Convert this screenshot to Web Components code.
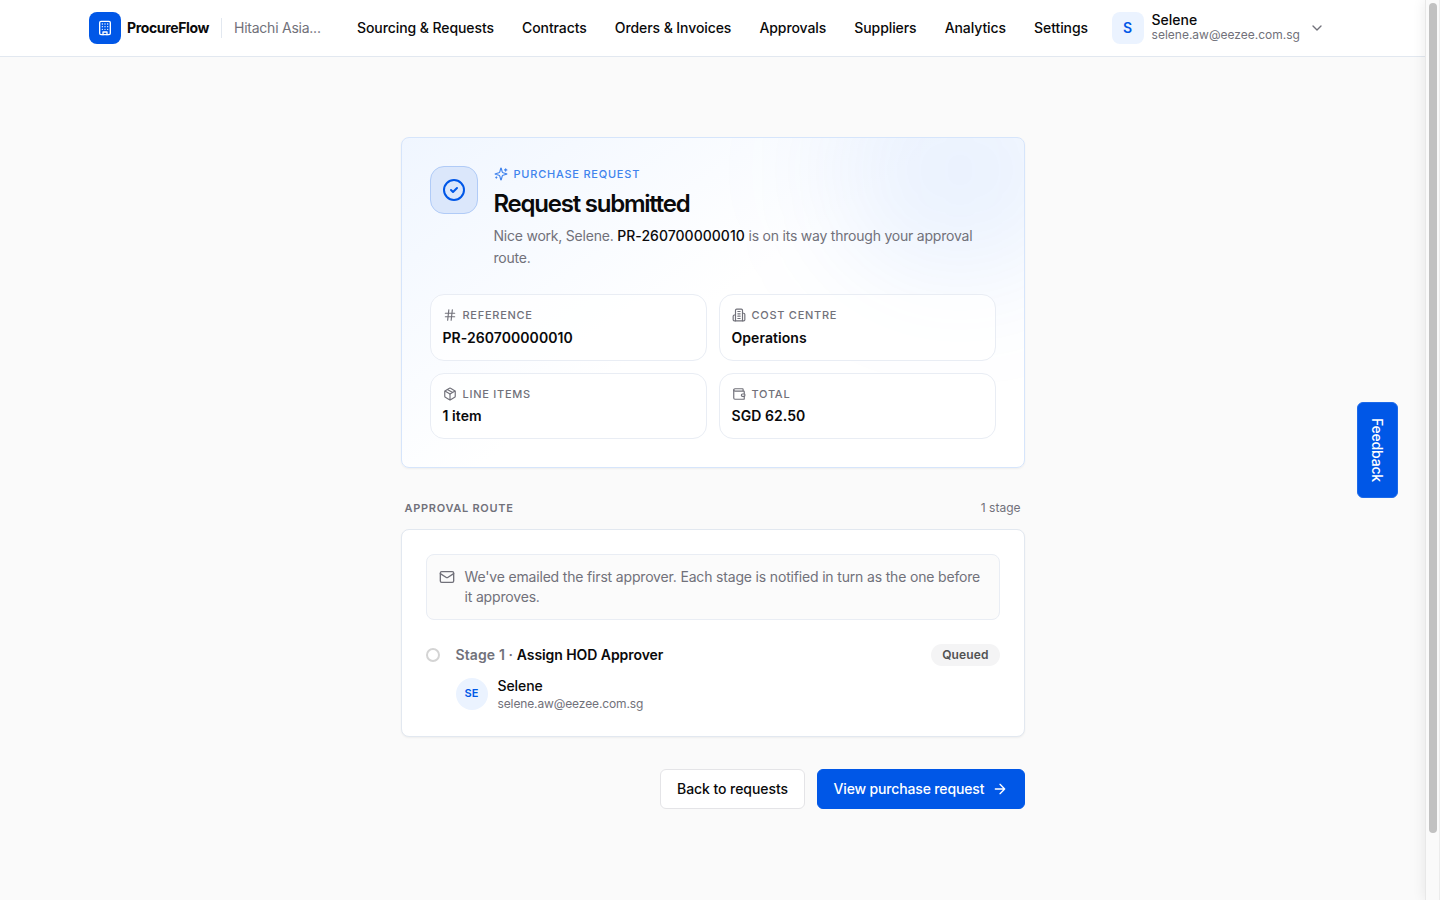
<!DOCTYPE html>
<html lang="en">
<head>
<meta charset="utf-8">
<title>ProcureFlow</title>
<style>
html,body{margin:0;height:100%;overflow:hidden}
body{font-family:Inter,"Liberation Sans",sans-serif;font-size:14px;line-height:20px;color:#0a0a0b;background:#fafafa;--blue:#0057e7;--muted:#71717a;--line:#e2e8f0}
</style>
</head>
<body>
<pf-app></pf-app>
<script>
const ICONS={
building:'<rect width="16" height="20" x="4" y="2" rx="2"/><path d="M9 22v-4h6v4M8 6h.01M16 6h.01M12 6h.01M12 10h.01M12 14h.01M16 10h.01M16 14h.01M8 10h.01M8 14h.01"/>',
building2:'<path d="M6 22V4a2 2 0 0 1 2-2h8a2 2 0 0 1 2 2v18Z"/><path d="M6 12H4a2 2 0 0 0-2 2v6a2 2 0 0 0 2 2h2M18 9h2a2 2 0 0 1 2 2v9a2 2 0 0 1-2 2h-2M10 6h4M10 10h4M10 14h4M10 18h4"/>',
chevron:'<path d="m6 9 6 6 6-6"/>',
check:'<circle cx="12" cy="12" r="10"/><path d="m9 12 2 2 4-4"/>',
sparkles:'<path d="M9.937 15.5A2 2 0 0 0 8.5 14.063l-6.135-1.582a.5.5 0 0 1 0-.962L8.5 9.936A2 2 0 0 0 9.937 8.5l1.582-6.135a.5.5 0 0 1 .963 0L14.063 8.5A2 2 0 0 0 15.5 9.937l6.135 1.581a.5.5 0 0 1 0 .964L15.5 14.063a2 2 0 0 0-1.437 1.437l-1.582 6.135a.5.5 0 0 1-.963 0z"/><path d="M20 3v4M22 5h-4M4 17v2M5 18H3"/>',
hash:'<path d="M4 9h16M4 15h16M10 3 8 21M16 3l-2 18"/>',
box:'<path d="M11 21.73a2 2 0 0 0 2 0l7-4A2 2 0 0 0 21 16V8a2 2 0 0 0-1-1.73l-7-4a2 2 0 0 0-2 0l-7 4A2 2 0 0 0 3 8v8a2 2 0 0 0 1 1.73zM12 22V12"/><path d="m3.3 7 8.7 5 8.7-5M7.5 4.27l9 5.15"/>',
wallet:'<path d="M19 7V4a1 1 0 0 0-1-1H5a2 2 0 0 0 0 4h15a1 1 0 0 1 1 1v4h-3a2 2 0 0 0 0 4h3a1 1 0 0 0 1-1v-2a1 1 0 0 0-1-1"/><path d="M3 5v14a2 2 0 0 0 2 2h15a1 1 0 0 0 1-1v-4"/>',
mail:'<rect width="20" height="16" x="2" y="4" rx="2"/><path d="m22 7-8.97 5.7a1.94 1.94 0 0 1-2.06 0L2 7"/>',
arrow:'<path d="M5 12h14M12 5l7 7-7 7"/>'
};
function define(name,css,html){
  customElements.define(name,class extends HTMLElement{
    constructor(){
      super();
      const t=document.createElement('template');
      const markup=typeof html==='function'?html(this):html;
      t.innerHTML=`<style>*{box-sizing:border-box}${css}</style>${markup}`;
      this.attachShadow({mode:'open'}).append(t.content.cloneNode(true));
    }
  });
}
customElements.define('pf-icon',class extends HTMLElement{
  connectedCallback(){
    if(this.shadowRoot)return;
    const s=this.getAttribute('size')||16,w=this.getAttribute('stroke')||2;
    this.attachShadow({mode:'open'}).innerHTML=`<style>:host{display:block;flex:none;width:${s}px;height:${s}px}svg{display:block}</style><svg width="${s}" height="${s}" viewBox="0 0 24 24" fill="none" stroke="currentColor" stroke-width="${w}" stroke-linecap="round" stroke-linejoin="round">${ICONS[this.getAttribute('name')]}</svg>`;
  }
});
define('pf-brand',`:host{display:flex;align-items:center;width:236px;flex:none}
.logo{width:32px;height:32px;border-radius:8px;background:var(--blue);color:#fff;display:grid;place-items:center}
b{font-weight:700;letter-spacing:-.35px;margin-left:6px;width:94px}
.org{border-left:1px solid var(--line);height:20px;padding-left:12px;color:var(--muted);white-space:nowrap;letter-spacing:-.24px}`,
`<div class="logo"><pf-icon name="building"></pf-icon></div><b>ProcureFlow</b><div class="org">Hitachi Asia...</div>`);
define('pf-nav',`:host{display:flex;gap:28.1px;margin-left:32px;font-weight:500;white-space:nowrap;letter-spacing:-.085px}`,`<slot></slot>`);
define('pf-user',`:host{display:flex;align-items:center;margin-left:23.6px}
.av{width:32px;height:32px;border-radius:8px;background:#ebf3ff;color:#0057e7;font-weight:600;display:grid;place-items:center;margin-right:8px}
.n{font-weight:500;line-height:14px}.e{font-size:12px;line-height:15px;color:var(--muted);width:149px;margin-bottom:1px}
pf-icon{margin-left:8px;color:var(--muted)}`,
`<div class="av">S</div><div><div class="n">Selene</div><div class="e">selene.aw@eezee.com.sg</div></div><pf-icon name="chevron"></pf-icon>`);
define('pf-header',`:host{display:flex;align-items:center;height:57px;background:#fff;border-bottom:1px solid var(--line);padding-left:89px;box-sizing:border-box}`,
`<pf-brand></pf-brand><pf-nav><span>Sourcing &amp; Requests</span><span>Contracts</span><span>Orders &amp; Invoices</span><span>Approvals</span><span>Suppliers</span><span>Analytics</span><span>Settings</span></pf-nav><pf-user></pf-user>`);
define('pf-stat',`:host{display:block;border:1px solid #e9edf4;border-radius:14px;padding:12px;background:rgba(255,255,255,.7)}
.l{display:flex;gap:6px;align-items:center;font-size:11px;line-height:16.5px;font-weight:500;letter-spacing:.73px;color:var(--muted);text-transform:uppercase}
.v{margin-top:4px;font-weight:600;letter-spacing:.06px}`,
el=>`<div class="l"><pf-icon size="14" name="${el.getAttribute('icon')}"></pf-icon>${el.getAttribute('label')}</div><div class="v"><slot></slot></div>`);
define('pf-summary',`:host{display:block;box-sizing:border-box;position:relative;overflow:hidden;border:1px solid #d6e5fb;border-radius:8px;padding:28px;background:linear-gradient(145deg,#f0f6ff 0%,#fff 50%);box-shadow:0 1px 2px rgba(0,0,0,.05)}
.glow{position:absolute;right:-64px;top:-80px;width:256px;height:224px;border-radius:50%;background:rgba(0,97,240,.085);filter:blur(60px)}
.top{display:flex;gap:16px;position:relative}
.ic{width:48px;height:48px;flex:none;border-radius:14px;border:1px solid #b0cbf7;background:#dbe7fb;color:var(--blue);display:grid;place-items:center}
.eb{display:flex;gap:6px;align-items:center;font-size:11px;line-height:16.5px;font-weight:500;letter-spacing:.77px;color:#4083ed}
h1{margin:5px 0 0;font-size:24px;line-height:32px;font-weight:600;letter-spacing:-1.23px}
p{margin:5px 0 0;line-height:22.75px;color:var(--muted);letter-spacing:-.22px;white-space:nowrap}p b{font-weight:500;color:#0a0a0b;letter-spacing:.03px}
.grid{display:grid;grid-template-columns:1fr 1fr;gap:12px;margin-top:24px;position:relative}`,
`<div class="glow"></div><div class="top"><div class="ic"><pf-icon name="check" size="24"></pf-icon></div><div><div class="eb"><pf-icon name="sparkles" size="14"></pf-icon>PURCHASE REQUEST</div><h1>Request submitted</h1><p>Nice work, Selene. <b>PR-260700000010</b> is on its way through your approval<br>route.</p></div></div>
<div class="grid"><pf-stat icon="hash" label="Reference">PR-260700000010</pf-stat><pf-stat icon="building2" label="Cost centre">Operations</pf-stat><pf-stat icon="box" label="Line items">1 item</pf-stat><pf-stat icon="wallet" label="Total">SGD 62.50</pf-stat></div>`);
define('pf-stage',`:host{display:flex;gap:16px;margin-top:24px}
.dot{width:14px;height:14px;border:2px solid #d4d4d4;border-radius:50%;margin-top:4px;flex:none}
.m{flex:1}.h{display:flex;justify-content:space-between;align-items:center;height:22px;font-weight:600;color:var(--muted);letter-spacing:.11px}
.h b{font-weight:600;color:#0a0a0b;letter-spacing:-.07px}.pill{font-size:12px;line-height:22px;font-weight:600;color:#525252;background:#f4f4f5;border-radius:11px;padding:0 11px;letter-spacing:.1px}
.p{display:flex;align-items:center;gap:10px;margin-top:10px}
.av{width:32px;height:32px;border-radius:50%;background:#ebf3ff;color:var(--blue);font-size:11px;font-weight:600;display:grid;place-items:center;line-height:18px;padding-bottom:2px}
.n{font-weight:500;line-height:20px;color:#0a0a0b;letter-spacing:-.08px}.e{font-size:12px;line-height:16px;color:var(--muted);letter-spacing:-.12px}`,
`<div class="dot"></div><div class="m"><div class="h"><span>Stage 1 · <b>Assign HOD Approver</b></span><span class="pill">Queued</span></div><div class="p"><div class="av">SE</div><div><div class="n">Selene</div><div class="e">selene.aw@eezee.com.sg</div></div></div></div>`);
define('pf-route',`:host{display:block;margin-top:31px}
.t{display:flex;justify-content:space-between;align-items:center;padding:0 4px;height:17px;margin-bottom:13px;font-size:12px;color:var(--muted)}
.t b{font-size:11px;font-weight:600;letter-spacing:.71px}
.card{border:1px solid var(--line);border-radius:8px;background:#fff;padding:24px;box-shadow:0 1px 2px rgba(0,0,0,.05)}
.note{display:flex;gap:10px;border:1px solid #e9edf4;border-radius:8px;background:#fbfbfb;padding:12px;color:var(--muted);letter-spacing:-.17px;white-space:nowrap}.note pf-icon{margin-top:2px}`,
`<div class="t"><b>APPROVAL ROUTE</b><span>1 stage</span></div><div class="card"><div class="note"><pf-icon name="mail"></pf-icon><div>We've emailed the first approver. Each stage is notified in turn as the one before<br>it approves.</div></div><pf-stage></pf-stage></div>`);
define('pf-button',`:host{display:flex;align-items:center;justify-content:center;box-sizing:border-box;width:145px;height:40px;border:1px solid #e4e4e7;background:#fff;border-radius:6px;padding:0 15px 0 16px;font-weight:500;white-space:nowrap;letter-spacing:-.07px}
:host([primary]){width:208px;padding:0 16px;justify-content:space-between;letter-spacing:-.15px;background:var(--blue);border-color:var(--blue);color:#fff}`,`<slot></slot>`);
define('pf-feedback',`:host{position:absolute;left:1357px;top:402px;width:40.5px;height:96px;box-sizing:border-box;border-radius:6px;background:var(--blue);border:1px solid #1c69e9;color:#fff;display:grid;place-items:center}
span{writing-mode:vertical-rl;font-weight:500;line-height:20px;letter-spacing:-.2px}`,`<span>Feedback</span>`);
define('pf-scrollbar',`:host{width:15px;height:900px;box-sizing:border-box;flex:none;background:#fafafa;border-left:1px solid #e8e8e8;border-right:1px solid #ececec;padding:3px 2px 0 3px;box-shadow:0 0 14px rgba(0,0,0,.09);position:relative}
div{width:8px;height:830px;border-radius:4px;background:#c1c1c1}`,`<div></div>`);
define('pf-app',`:host{display:flex;height:900px;width:1440px;overflow:hidden;position:relative}
.page{width:1425px;flex:none}main{width:624px;margin:80px auto 0}
.actions{display:flex;justify-content:flex-end;gap:12px;margin-top:32px}`,
`<div class="page"><pf-header></pf-header><main><pf-summary></pf-summary><pf-route></pf-route><div class="actions"><pf-button>Back to requests</pf-button><pf-button primary>View purchase request<pf-icon name="arrow"></pf-icon></pf-button></div></main></div><pf-scrollbar></pf-scrollbar><pf-feedback></pf-feedback>`);
</script>
</body>
</html>
